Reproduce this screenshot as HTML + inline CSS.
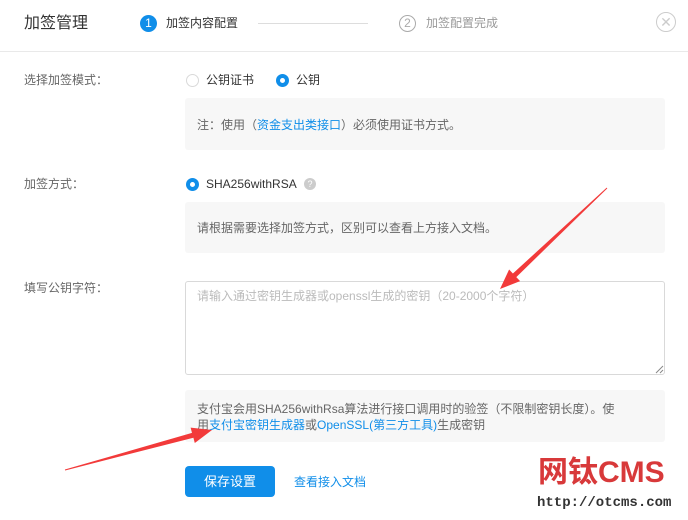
<!DOCTYPE html>
<html><head><meta charset="utf-8"><style>
*{margin:0;padding:0;box-sizing:border-box}
body{width:688px;height:520px;background:#fff;position:relative;overflow:hidden;font-family:"Liberation Sans","Noto Sans CJK SC",sans-serif;font-size:12px;color:#666}
.a{position:absolute;white-space:nowrap;line-height:16px}
.box{position:absolute;left:185px;width:480px;background:#f7f7f7;border-radius:3px}
.blue{color:#108ee9}
.rad{position:absolute;width:13px;height:13px;border-radius:50%;border:1px solid #d9d9d9;background:#fff}
.rad.on{border:4px solid #108ee9}
</style></head><body>
<div class="a" style="left:24px;top:14px;font-size:16px;line-height:20px;color:#333">加签管理</div>
<div class="a" style="left:140px;top:15px;width:17px;height:17px;border-radius:50%;background:#108ee9;color:#fff;text-align:center;font-size:12px;line-height:17px">1</div>
<div class="a" style="left:166px;top:15px;color:#333">加签内容配置</div>
<div class="a" style="left:258px;top:23px;width:110px;height:1px;background:#ddd"></div>
<div class="a" style="left:399px;top:15px;width:17px;height:17px;border-radius:50%;border:1px solid #aaa;color:#aaa;text-align:center;font-size:12px;line-height:15px">2</div>
<div class="a" style="left:426px;top:15px;color:#999">加签配置完成</div>
<div class="a" style="left:656px;top:12px;width:20px;height:20px;border-radius:50%;border:1px solid #ccc;color:#ccc;text-align:center;font-size:14px;line-height:18px">✕</div>
<div class="a" style="left:0;top:51px;width:688px;height:1px;background:#e9e9e9"></div>

<div class="a" style="left:24px;top:72px">选择加签模式：</div>
<div class="rad" style="left:186px;top:74px"></div>
<div class="a" style="left:206px;top:72px;color:#333">公钥证书</div>
<div class="rad on" style="left:276px;top:74px"></div>
<div class="a" style="left:296px;top:72px;color:#333">公钥</div>
<div class="box" style="top:98px;height:52px"></div>
<div class="a" style="left:197px;top:117px">注：使用（<span class="blue">资金支出类接口</span>）必须使用证书方式。</div>

<div class="a" style="left:24px;top:176px">加签方式：</div>
<div class="rad on" style="left:186px;top:178px"></div>
<div class="a" style="left:206px;top:176px;color:#333">SHA256withRSA</div>
<div class="a" style="left:304px;top:178px;width:12px;height:12px;border-radius:50%;background:#ccc;color:#fff;font-size:9px;line-height:12px;text-align:center">?</div>
<div class="box" style="top:202px;height:51px"></div>
<div class="a" style="left:197px;top:220px">请根据需要选择加签方式，区别可以查看上方接入文档。</div>

<div class="a" style="left:24px;top:280px">填写公钥字符：</div>
<div class="a" style="left:185px;top:281px;width:480px;height:94px;border:1px solid #d9d9d9;border-radius:3px"></div>
<div class="a" style="left:197px;top:288px;color:#bbb">请输入通过密钥生成器或openssl生成的密钥（20-2000个字符）</div>
<svg class="a" style="left:654px;top:364px" width="10" height="10"><path d="M9 2 L2 9 M9 6 L6 9" stroke="#888" stroke-width="1"/></svg>
<div class="box" style="top:390px;height:52px"></div>
<div class="a" style="left:197px;top:401px">支付宝会用SHA256withRsa算法进行接口调用时的验签（不限制密钥长度）。使</div>
<div class="a" style="left:197px;top:417px">用<span class="blue">支付宝密钥生成器</span>或<span class="blue">OpenSSL(第三方工具)</span>生成密钥</div>

<div class="a" style="left:185px;top:466px;width:90px;height:31px;background:#108ee9;border-radius:4px;color:#fff;font-size:13px;line-height:31px;text-align:center">保存设置</div>
<div class="a" style="left:294px;top:474px;color:#108ee9">查看接入文档</div>

<div class="a" style="left:538px;top:455px;font-size:30px;line-height:36px;font-weight:bold;color:#d8393a">网钛CMS</div>
<div class="a" style="left:537px;top:495px;font-size:14px;line-height:16px;font-weight:bold;color:#333;font-family:'Liberation Mono',monospace">http://otcms.com</div>

<svg class="a" style="left:0;top:0" width="688" height="520">
<polygon points="607.3,188.4 516.3,277.1 520.1,281.1 500,289 509.1,269.5 512.9,273.5 606.7,187.6" fill="#f23a3a"/>
<polygon points="65.1,470.5 193.4,437.7 194.8,443 212,430 190.6,427.6 192,432.9 64.9,469.5" fill="#f23a3a"/>
</svg>
</body></html>
